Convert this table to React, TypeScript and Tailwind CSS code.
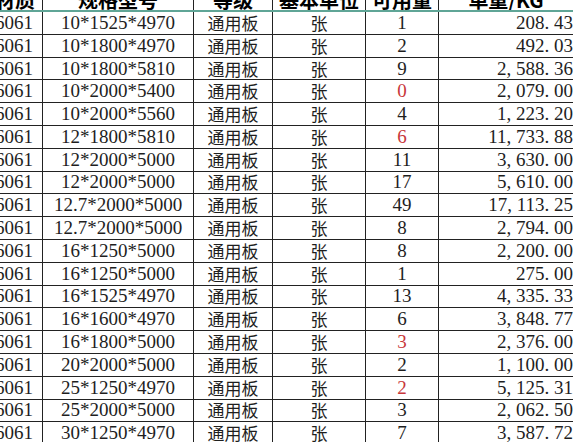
import React from "react";

type Row = { spec: string; qty: string; red?: boolean; weight: string };

const rows: Row[] = [
  { spec: "10*1525*4970", qty: "1", weight: "208. 43" },
  { spec: "10*1800*4970", qty: "2", weight: "492. 03" },
  { spec: "10*1800*5810", qty: "9", weight: "2, 588. 36" },
  { spec: "10*2000*5400", qty: "0", red: true, weight: "2, 079. 00" },
  { spec: "10*2000*5560", qty: "4", weight: "1, 223. 20" },
  { spec: "12*1800*5810", qty: "6", red: true, weight: "11, 733. 88" },
  { spec: "12*2000*5000", qty: "11", weight: "3, 630. 00" },
  { spec: "12*2000*5000", qty: "17", weight: "5, 610. 00" },
  { spec: "12.7*2000*5000", qty: "49", weight: "17, 113. 25" },
  { spec: "12.7*2000*5000", qty: "8", weight: "2, 794. 00" },
  { spec: "16*1250*5000", qty: "8", weight: "2, 200. 00" },
  { spec: "16*1250*5000", qty: "1", weight: "275. 00" },
  { spec: "16*1525*4970", qty: "13", weight: "4, 335. 33" },
  { spec: "16*1600*4970", qty: "6", weight: "3, 848. 77" },
  { spec: "16*1800*5000", qty: "3", red: true, weight: "2, 376. 00" },
  { spec: "20*2000*5000", qty: "2", weight: "1, 100. 00" },
  { spec: "25*1250*4970", qty: "2", red: true, weight: "5, 125. 31" },
  { spec: "25*2000*5000", qty: "3", weight: "2, 062. 50" },
  { spec: "30*1250*4970", qty: "7", weight: "3, 587. 72" },
];

const serif = "font-['Liberation_Serif','Noto_Sans_CJK_SC',serif]";
const cjk = "font-['Noto_Sans_CJK_SC',sans-serif]";

export default function App() {
  return (
    <div className="w-[573px] h-[442px] overflow-hidden bg-white text-[#1e1e1e]">
      {/* header (cut off at top) */}
      <div className="flex h-[12px] border-b-2 border-[#5fa596] overflow-hidden font-bold text-[20px] leading-[20px] text-black">
        <div className={`w-[43px] shrink-0 border-r border-[#222] flex justify-end items-end pr-[7px] overflow-hidden whitespace-nowrap ${cjk}`}>
          <span>材质</span>
        </div>
        <div className={`w-[151px] shrink-0 border-r border-[#222] flex justify-center items-end overflow-hidden ${cjk}`}>
          <span>规格型号</span>
        </div>
        <div className={`w-[79px] shrink-0 border-r border-[#222] flex justify-center items-end overflow-hidden ${cjk}`}>
          <span>等级</span>
        </div>
        <div className={`w-[93px] shrink-0 border-r border-[#222] flex justify-center items-end overflow-hidden ${cjk}`}>
          <span>基本单位</span>
        </div>
        <div className={`w-[73px] shrink-0 border-r border-[#222] flex justify-center items-end overflow-hidden ${cjk}`}>
          <span>可用量</span>
        </div>
        <div className={`flex-1 flex justify-center items-end overflow-hidden ${cjk}`}>
          <span>单重/KG</span>
        </div>
      </div>

      {rows.map((r, i) => (
        <div key={i} className="flex h-[22.8px] border-b border-[#222] text-[19px] leading-[22px]">
          <div className={`w-[43px] shrink-0 border-r border-[#222] flex justify-end items-center pr-[9px] overflow-hidden whitespace-nowrap ${serif}`}>
            6061
          </div>
          <div className={`w-[151px] shrink-0 border-r border-[#222] flex justify-center items-center whitespace-nowrap ${serif}`}>
            {r.spec}
          </div>
          <div className={`w-[79px] shrink-0 border-r border-[#222] flex justify-center items-center text-[17px] ${cjk}`}>
            通用板
          </div>
          <div className={`w-[93px] shrink-0 border-r border-[#222] flex justify-center items-center text-[17px] ${cjk}`}>
            张
          </div>
          <div
            className={`w-[73px] shrink-0 border-r border-[#222] flex justify-center items-center ${serif} ${
              r.red ? "text-[#c8373a]" : ""
            }`}
          >
            {r.qty}
          </div>
          <div className={`flex-1 flex justify-end items-center whitespace-nowrap ${serif}`}>
            {r.weight}
          </div>
        </div>
      ))}
    </div>
  );
}
